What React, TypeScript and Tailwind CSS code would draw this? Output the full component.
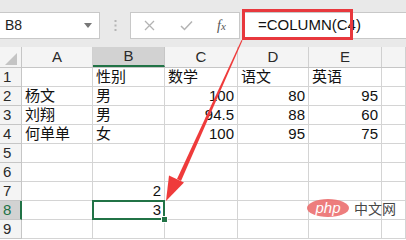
import React from "react";

const cols = [22, 71, 72, 73, 71, 73, 24];
const colLetters = ["A", "B", "C", "D", "E", ""];

type Cell = { v: string; num?: boolean };
const data: Record<number, (Cell | null)[]> = {
  1: [null, { v: "性别" }, { v: "数学" }, { v: "语文" }, { v: "英语" }, null],
  2: [{ v: "杨文" }, { v: "男" }, { v: "100", num: true }, { v: "80", num: true }, { v: "95", num: true }, null],
  3: [{ v: "刘翔" }, { v: "男" }, { v: "94.5", num: true }, { v: "88", num: true }, { v: "60", num: true }, null],
  4: [{ v: "何单单" }, { v: "女" }, { v: "100", num: true }, { v: "95", num: true }, { v: "75", num: true }, null],
  7: [null, { v: "2", num: true }, null, null, null, null],
  8: [null, { v: "3", num: true }, null, null, null, null],
};

const font = { fontFamily: '"Liberation Sans", "Noto Sans CJK SC", sans-serif' };

export default function App() {
  return (
    <div className="relative w-[406px] h-[240px] overflow-hidden bg-white text-black" style={font}>
      {/* top bar */}
      <div className="h-[47px] bg-[#e9e9e9] flex items-start pt-[12px]">
        <div className="w-[100px] h-[27px] bg-white border border-l-0 border-[#c8c8c8] flex items-center justify-between pl-[5px] pr-[7px]">
          <span className="text-[14px] text-[#222]">B8</span>
          <svg width="8" height="5" viewBox="0 0 8 5">
            <path d="M0 0 L8 0 L4 5 Z" fill="#777" />
          </svg>
        </div>
        <div className="w-[30px] h-[27px] flex items-center justify-center">
          <svg width="3" height="11" viewBox="0 0 3 11">
            <rect x="0.5" y="0" width="2" height="2" fill="#b5b5b5" />
            <rect x="0.5" y="4.5" width="2" height="2" fill="#b5b5b5" />
            <rect x="0.5" y="9" width="2" height="2" fill="#b5b5b5" />
          </svg>
        </div>
        <div className="w-[110px] h-[27px] bg-white border border-[#c8c8c8] flex items-center">
          <div className="w-[37px] flex justify-center">
            <svg width="11" height="11" viewBox="0 0 11 11">
              <path d="M1 1 L10 10 M10 1 L1 10" stroke="#b3b3b3" strokeWidth="1.3" />
            </svg>
          </div>
          <div className="w-[36px] flex justify-center">
            <svg width="13" height="11" viewBox="0 0 13 11">
              <path d="M1 6 L4.5 9.5 L12 1.5" stroke="#b3b3b3" strokeWidth="1.5" fill="none" />
            </svg>
          </div>
          <div className="w-[35px] flex justify-center">
            <span className="text-[14px] italic text-[#555]" style={{ fontFamily: '"Liberation Serif", serif' }}>
              f<span className="text-[11px]">x</span>
            </span>
          </div>
        </div>
        <div className="flex-1 h-[27px] bg-white border border-r-0 border-[#c8c8c8] ml-[2px] flex items-center pl-[15px]">
          <span className="text-[15px] text-[#111]">=COLUMN(C4)</span>
        </div>
      </div>

      {/* header row */}
      <div className="flex h-[21px] bg-[#f4f4f4] border-b border-[#c6c6c6]">
        <div className="relative border-r border-[#c6c6c6]" style={{ width: cols[0] }}>
          <svg className="absolute left-[5px] top-[6px]" width="12" height="12" viewBox="0 0 12 12">
            <path d="M12 0 L12 12 L0 12 Z" fill="#c4c4c4" />
          </svg>
        </div>
        {colLetters.map((c, i) => (
          <div
            key={i}
            className={
              c === "B"
                ? "flex items-center justify-center text-[15px] text-[#2a2a2a] bg-[#d2d2d2] border-r border-[#c6c6c6] border-b-2 border-b-[#217346]"
                : "flex items-center justify-center text-[15px] text-[#2a2a2a] border-r border-[#d0d0d0]"
            }
            style={{ width: cols[i + 1] }}
          >
            {c}
          </div>
        ))}
      </div>

      {/* rows */}
      {[1, 2, 3, 4, 5, 6, 7, 8, 9].map((r) => (
        <div key={r} className="flex h-[19px]">
          <div
            className={
              r === 8
                ? "flex items-center pl-[3px] text-[15px] text-[#217346] bg-[#d2d2d2] border-b border-[#c6c6c6] border-r-2 border-r-[#217346]"
                : "flex items-center pl-[3px] text-[15px] text-[#2a2a2a] bg-[#f4f4f4] border-b border-[#c6c6c6] border-r border-r-[#c6c6c6]"
            }
            style={{ width: cols[0] }}
          >
            {r}
          </div>
          {colLetters.map((c, i) => {
            const cell = data[r]?.[i] ?? null;
            const selected = r === 8 && c === "B";
            return (
              <div
                key={i}
                className={
                  "relative flex items-center pt-[1px] px-[3px] text-[15px] text-[#111] border-r border-b border-[#d4d4d4] " +
                  (cell?.num ? "justify-end" : "justify-start")
                }
                style={{ width: cols[i + 1] }}
              >
                {cell?.v}
                {selected && (
                  <>
                    <div className="absolute z-10 left-[-1px] top-[-1px] right-[-1px] bottom-[-1px] border-2 border-[#217346]" />
                    <div className="absolute z-10 right-[-4px] bottom-[-4px] w-[7px] h-[7px] bg-[#217346] border border-white" />
                  </>
                )}
              </div>
            );
          })}
        </div>
      ))}

      {/* red highlight box */}
      <div className="absolute left-[242px] top-[9px] w-[111px] h-[31px] border-[3px] border-[#e8383d]" />

      {/* arrow */}
      <svg className="absolute z-20 left-0 top-0 pointer-events-none" width="406" height="240" viewBox="0 0 406 240">
        <path d="M241.5 40 L242.5 40.5 L181 181 L177 179 Z" fill="#ef3b3b" />
        <path d="M166 201 L169 175.5 L184 182.5 Z" fill="#ef3b3b" />
      </svg>

      {/* watermark */}
      <div className="absolute z-20 left-[307px] top-[199px] flex items-center gap-[5px] pointer-events-none">
        <div className="w-[42px] h-[18px] rounded-[50%] bg-[#ec6f6f] opacity-90 flex items-center justify-center">
          <span className="text-white italic text-[15px] leading-none -mt-[2px]" style={{ fontFamily: '"Liberation Sans", sans-serif' }}>
            php
          </span>
        </div>
        <span className="text-[14px] text-[#333] opacity-90 leading-none" style={{ fontFamily: '"Noto Sans CJK SC", sans-serif' }}>
          中文网
        </span>
      </div>
    </div>
  );
}
